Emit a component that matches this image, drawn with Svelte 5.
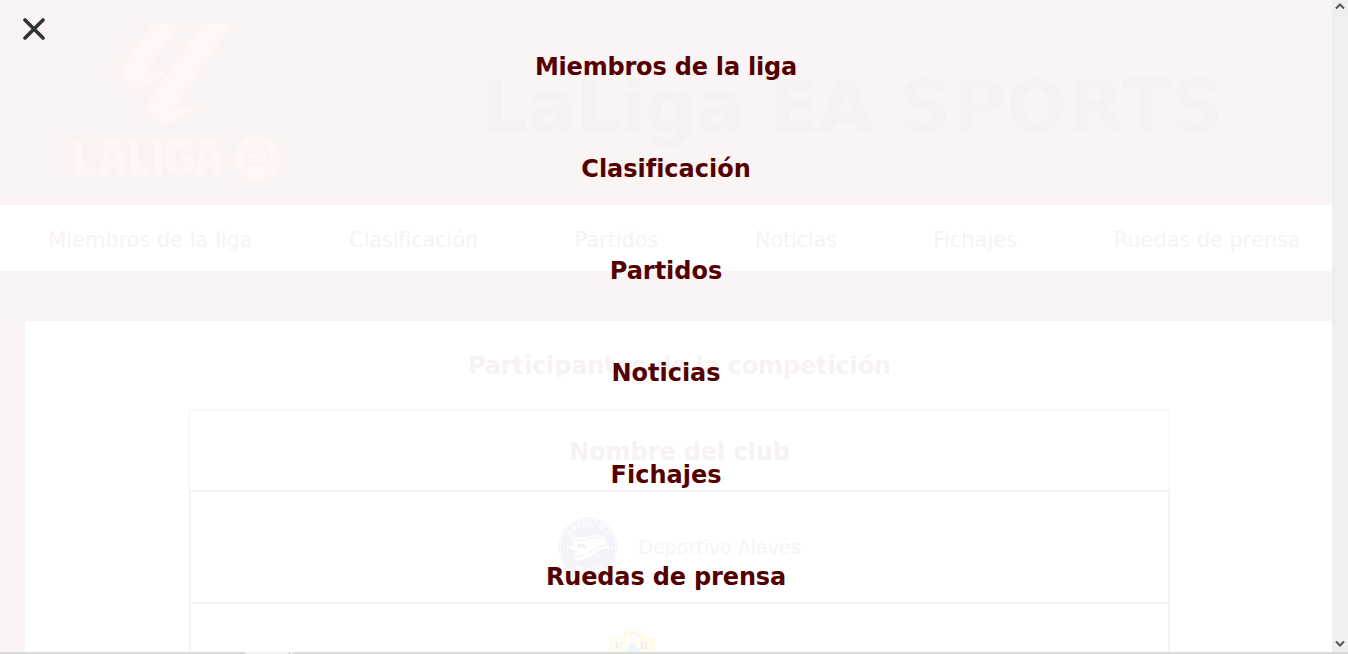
<script>
  const links = [
    { name: 'Miembros de la liga', bar: -0.06, menu: -0.2 },
    { name: 'Clasificación', bar: -0.2, menu: -0.02 },
    { name: 'Partidos', bar: -0.08, menu: -0.02 },
    { name: 'Noticias', bar: -0.25, menu: 0 },
    { name: 'Fichajes', bar: 0, menu: 0 },
    { name: 'Ruedas de prensa', bar: -0.08, menu: -0.15 }
  ];
</script>

<div class="window">
  <div class="page">
    <header>
      <svg class="logo" width="206" height="158" viewBox="74 23 206 158" aria-label="LaLiga EA Sports">
        <g fill="#fff6f5">
          <path d="M153 24H180L145 73H167L133 91.500L126 82Q118 73 125 62Z" />
          <path d="M202 24H232L175 107H200L162 127.500L152 116Q145 107 151 98Z" />
          <path d="M75 140H82V167H95V175H81Q75 175 75 169Z" />
          <path fill-rule="evenodd" d="M108 140H116Q119 140 120 143L127 175H118L116 164L108 169L106 175H99L106 143Q106 140 108 140ZM112 150L109 163L115 160Z" />
          <path d="M130 140H138V167H150V175H136Q130 175 130 169ZM154 140H162V175H154Z" />
          <path d="M174 140H186Q193 140 193 148V151H185V148H175V167H185V162H180V155H193V168Q193 175 186 175H174Q167 175 167 168V147Q167 140 174 140Z" />
          <path fill-rule="evenodd" d="M204 140H212Q215 140 216 143L223 175H214L212 164L204 169L202 175H195L202 143Q202 140 204 140ZM208 150L205 163L211 160Z" />
          <circle cx="258" cy="158" r="22.200" />
        </g>
        <g fill="none" stroke="#faf4f4" stroke-width="2">
          <path d="M248 147H261M246 153H257M259 146L252 159H244L247 155M252 159H256L264 147L270 159M260 156H268" />
        </g>
        <text x="243" y="167" textLength="30" font-size="7" font-weight="700" fill="#faf4f4">SPORTS</text>
      </svg>
      <h1><span class="liga">LaLiga</span> EA <span class="sports">SPORTS</span></h1>
    </header>
    <nav class="bar">
      {#each links as link}<span style:letter-spacing="{link.bar}px">{link.name}</span>{/each}
    </nav>
    <main>
      <h2>Participantes de la competición</h2>
      <div class="table">
        <div class="head">Nombre del club</div>
        <div class="row">
          <svg width="60" height="60" viewBox="0 0 60 60">
            <defs><path id="arcTop" d="M8.500 30A21.500 21.500 0 0 1 51.500 30" /><path id="arcBottom" d="M4 30A26 26 0 0 0 56 30" /></defs>
            <circle cx="30" cy="30" r="29.500" fill="#f3f4f9" />
            <circle cx="30" cy="30" r="27.800" fill="none" stroke="#fcfcfe" />
            <circle cx="30" cy="30" r="20.500" fill="none" stroke="#f8f9fc" />
            <path d="M12 18Q20 23 30 19T47 21L51 31Q43 31 37 36T18 44L16 37L20 35L9 30L16 28Z" fill="#fefefe" />
            <path d="M14 21Q23 26 31 22T46 24M17 40Q27 40 34 34T49 29" fill="none" stroke="#f3f4f9" />
            <path d="M19 28L22 26L24 29L25 26L29 31L24 30L21 31Z" fill="#eff0f7" />
            <g fill="#fdfdff" font-size="6.500" font-weight="700">
              <text><textPath href="#arcTop" startOffset="12" textLength="44">DEPORTIVO</textPath></text>
              <text><textPath href="#arcBottom" startOffset="26" textLength="31">ALAVÉS</textPath></text>
            </g>
            <circle cx="6" cy="30" r="1.500" fill="#fcfcfe" /><circle cx="54" cy="30" r="1.500" fill="#fcfcfe" />
          </svg>
          <span>Deportivo Alavés</span>
        </div>
        <div class="row second">
          <svg width="46" height="60" viewBox="0 0 46 60">
            <path d="M1 9.500H13Q15 .500 23 .500T33 9.500H45V23H1Z" fill="#fffdf3" stroke="#fffae0" stroke-width="1.500" />
            <path d="M16 10Q17 3.500 23 3.500T30 10" fill="#fefefa" stroke="#faf7e9" />
            <circle cx="23" cy="6.500" r="2.500" fill="none" stroke="#f7f4ea" />
            <path d="M15 23L23 12L31 23Z" fill="#eff6fb" />
            <text class="serif" x="5" y="20" font-size="10" font-weight="700" fill="#fce8e7">U</text>
            <text class="serif" x="30" y="20" font-size="10" font-weight="700" fill="#fce8e7">D</text>
          </svg>
          <span>Almería</span>
        </div>
      </div>
    </main>
  </div>

  <div class="overlay">
    <svg class="close" width="22" height="22" viewBox="0 0 22 22"><path d="M2 2L20 20M20 2L2 20" stroke="#333" stroke-width="3.600" stroke-linecap="round" /></svg>
    {#each links as link}<a href="#menu" style:letter-spacing="{link.menu}px">{link.name}</a>{/each}
  </div>

  <div class="scroll">
    <svg width="10" height="7" viewBox="0 0 10 7"><path d="M1 5.500L5 1.500L9 5.500" /></svg>
    <svg width="10" height="7" viewBox="0 0 10 7"><path d="M1 1.500L5 5.500L9 1.500" /></svg>
  </div>
  <div class="strip"><i></i><b></b></div>
</div>

<style>
  :global(body) { margin: 0; }
  .window { position: relative; width: 1348px; height: 654px; overflow: hidden; background: #faf4f4; font-family: Verdana, "DejaVu Sans", sans-serif; font-variant-ligatures: none; }
  .page { width: 1349px; }
  header { height: 205px; display: flex; box-sizing: border-box; padding: 23px 0 0 74px; }
  .logo { flex: none; }
  h1 { margin: 41px 0 0 202px; font-size: 72px; line-height: 84px; color: #f5f2f1; white-space: nowrap; }
  .liga { letter-spacing: -0.5px; }
  .sports { letter-spacing: 1.1px; }
  .bar { height: 66px; background: #fff; display: flex; justify-content: space-around; align-items: center; font-size: 21px; color: #f7f3f3; padding-top: 4px; box-sizing: border-box; white-space: nowrap; }
  main { margin: 50px 0 0 25px; width: 1309px; height: 340px; background: #fff; display: flex; flex-direction: column; align-items: center; }
  h2 { margin: 31px 0 29px; font-size: 24px; line-height: 29px; color: #f7f3f3; white-space: nowrap; letter-spacing: -0.15px; }
  .table { width: 981px; }
  .head { height: 80px; box-sizing: border-box; border: 1px solid #f4f4f4; border-bottom: 0; font-size: 24px; font-weight: 700; line-height: 82px; text-align: center; color: #f7f3f3; letter-spacing: -0.1px; }
  .row { height: 112px; box-sizing: border-box; border: 2px solid #f4f4f4; border-bottom: 0; display: flex; justify-content: center; align-items: center; gap: 20px; font-size: 19px; color: #f8f4f4; }
  .second { align-items: flex-start; padding-top: 25px; }
  .second span { margin-top: 19px; line-height: 24px; }
  .serif { font-family: "Liberation Serif", serif; }
  .overlay { position: absolute; left: 0; top: 0; width: 1332px; height: 652px; padding-top: 16px; box-sizing: border-box; display: flex; flex-direction: column; align-items: center; }
  .overlay a { height: 102px; line-height: 102px; flex: none; font-size: 24px; font-weight: 700; color: #500; text-decoration: none; white-space: nowrap; }
  .close { position: absolute; left: 23px; top: 18px; }
  .scroll { position: absolute; right: 0; top: 0; width: 16px; height: 652px; background: #efefef; box-sizing: border-box; padding: 3px 0 5px; display: flex; flex-direction: column; justify-content: space-between; align-items: center; }
  .scroll path { fill: none; stroke: #555; stroke-width: 2; }
  .strip { position: absolute; left: 0; bottom: 0; width: 100%; height: 2px; background: #dadada; display: flex; }
  .strip i { margin-left: 245px; width: 48px; background: #f1f1f1; }
  .strip b { width: 1px; margin-left: -4px; background: #c8c8c8; }
</style>
